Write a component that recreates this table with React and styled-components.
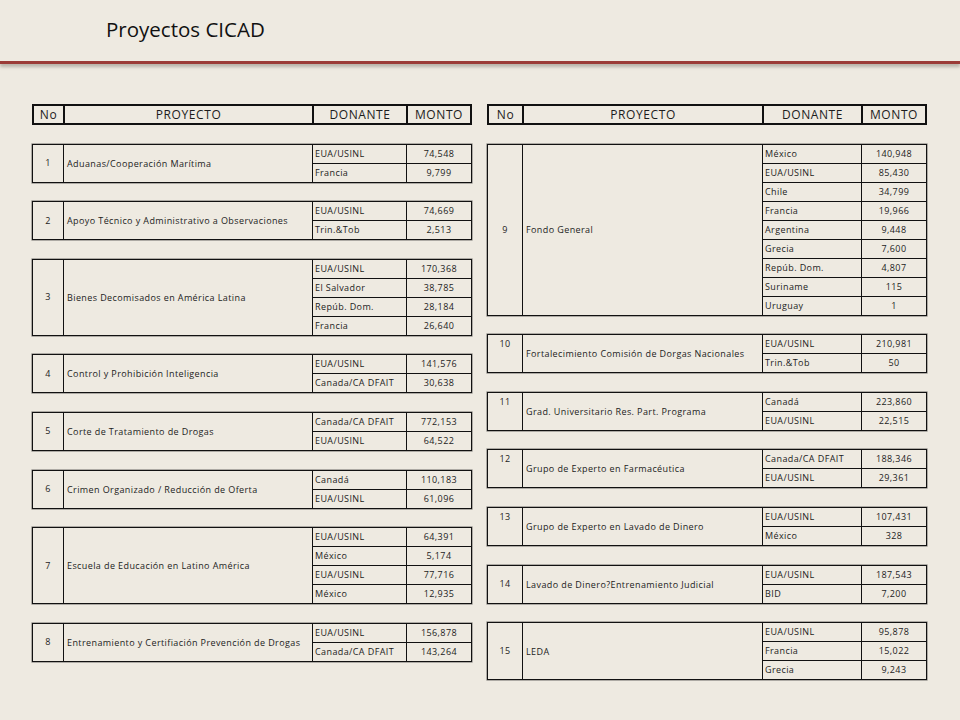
import React from 'react';
import styled, { createGlobalStyle } from 'styled-components';

const leftProjects = [
    { no: '1', name: 'Aduanas/Cooperación Marítima', rows: [['EUA/USINL', '74,548'], ['Francia', '9,799']] },
    { no: '2', name: 'Apoyo Técnico y Administrativo a Observaciones', rows: [['EUA/USINL', '74,669'], ['Trin.&Tob', '2,513']] },
    { no: '3', name: 'Bienes Decomisados en América Latina', rows: [['EUA/USINL', '170,368'], ['El Salvador', '38,785'], ['Repúb. Dom.', '28,184'], ['Francia', '26,640']] },
    { no: '4', name: 'Control y Prohibición Inteligencia', rows: [['EUA/USINL', '141,576'], ['Canada/CA DFAIT', '30,638']] },
    { no: '5', name: 'Corte de Tratamiento de Drogas', rows: [['Canada/CA DFAIT', '772,153'], ['EUA/USINL', '64,522']] },
    { no: '6', name: 'Crimen Organizado / Reducción de Oferta', rows: [['Canadá', '110,183'], ['EUA/USINL', '61,096']] },
    { no: '7', name: 'Escuela de Educación en Latino América', rows: [['EUA/USINL', '64,391'], ['México', '5,174'], ['EUA/USINL', '77,716'], ['México', '12,935']] },
    { no: '8', name: 'Entrenamiento y Certifiación Prevención de Drogas', rows: [['EUA/USINL', '156,878'], ['Canada/CA DFAIT', '143,264']] },
];

const rightProjects = [
    { no: '9', name: 'Fondo General', rows: [['México', '140,948'], ['EUA/USINL', '85,430'], ['Chile', '34,799'], ['Francia', '19,966'], ['Argentina', '9,448'], ['Grecia', '7,600'], ['Repúb. Dom.', '4,807'], ['Suriname', '115'], ['Uruguay', '1']] },
    { no: '10', top: true, name: 'Fortalecimiento Comisión de Dorgas Nacionales', rows: [['EUA/USINL', '210,981'], ['Trin.&Tob', '50']] },
    { no: '11', top: true, name: 'Grad. Universitario Res. Part. Programa', rows: [['Canadá', '223,860'], ['EUA/USINL', '22,515']] },
    { no: '12', top: true, name: 'Grupo de Experto en Farmacéutica', rows: [['Canada/CA DFAIT', '188,346'], ['EUA/USINL', '29,361']] },
    { no: '13', top: true, name: 'Grupo de Experto en Lavado de Dinero', rows: [['EUA/USINL', '107,431'], ['México', '328']] },
    { no: '14', name: 'Lavado de Dinero?Entrenamiento Judicial', rows: [['EUA/USINL', '187,543'], ['BID', '7,200']] },
    { no: '15', name: 'LEDA', rows: [['EUA/USINL', '95,878'], ['Francia', '15,022'], ['Grecia', '9,243']] },
];

// column tracks, header has a 2px frame, blocks a 1px one
const leftCols = { head: '29px 249px 94px 1fr', body: '30px 249px 94px 1fr' };
const rightCols = { head: '33px 240px 99px 1fr', body: '34px 240px 99px 1fr' };

function ProjectColumn({ cols, projects }) {
    return (
        <Column>
            <HeaderRow $cols={cols.head}>
                <HeadCell>No</HeadCell>
                <HeadCell $divider>PROYECTO</HeadCell>
                <HeadCell $divider>DONANTE</HeadCell>
                <HeadCell $divider>MONTO</HeadCell>
            </HeaderRow>
            {projects.map((p) => (
                <Block key={p.no} $cols={cols.body}>
                    <NoCell $span={p.rows.length} $top={p.top}>{p.no}</NoCell>
                    <NameCell $span={p.rows.length}>{p.name}</NameCell>
                    {p.rows.map(([donor, amount], i) => (
                        <React.Fragment key={i}>
                            <DonorCell $first={i === 0}>{donor}</DonorCell>
                            <AmountCell $first={i === 0}>{amount}</AmountCell>
                        </React.Fragment>
                    ))}
                </Block>
            ))}
        </Column>
    );
}

function App() {
    return (
        <>
            <GlobalStyle />
            <Page>
                <TitleBar>
                    <Title>Proyectos CICAD</Title>
                </TitleBar>
                <Content>
                    <ProjectColumn cols={leftCols} projects={leftProjects} />
                    <ProjectColumn cols={rightCols} projects={rightProjects} />
                </Content>
            </Page>
        </>
    );
}

export default App;

const GlobalStyle = createGlobalStyle`
  html, body {
    margin: 0;
    padding: 0;
    background: #eeeae1;
  }
  * { box-sizing: border-box; }
`;

const Page = styled.div`
    width: 960px;
    height: 720px;
    background: #eeeae1;
    font-family: "Open Sans", "Liberation Sans", sans-serif;
    color: #1c1c1c;
    overflow: hidden;
`;

const TitleBar = styled.div`
    padding: 16px 0 18px 106px;
    border-bottom: 3px solid #9b3b37;
    box-shadow: 0 3px 3px rgba(90, 80, 70, 0.35);
`;

const Title = styled.h1`
    margin: 0;
    font-size: 20.5px;
    line-height: 27px;
    font-weight: 400;
    color: #111;
`;

const Content = styled.div`
    display: flex;
    gap: 15px;
    padding: 40px 0 0 32px;
`;

const Column = styled.div`
    width: 440px;
    display: flex;
    flex-direction: column;
    gap: 18.6px;
`;

const HeaderRow = styled.div`
    display: grid;
    grid-template-columns: ${(p) => p.$cols};
    border: 2px solid #111;
    height: 21px;
`;

const HeadCell = styled.div`
    display: flex;
    align-items: center;
    justify-content: center;
    font-size: 12px;
    letter-spacing: 0.6px;
    line-height: 17px;
    border-left: ${(p) => (p.$divider ? '2px solid #111' : 'none')};
`;

const Block = styled.div`
    display: grid;
    grid-template-columns: ${(p) => p.$cols};
    border: 1px solid #111;
    box-shadow: 0 0 0 0.6px rgba(0, 0, 0, 0.45);
    font-size: 9px;
    letter-spacing: 0.4px;
`;

const NoCell = styled.div`
    grid-column: 1;
    grid-row: 1 / span ${(p) => p.$span};
    display: flex;
    justify-content: center;
    align-items: ${(p) => (p.$top ? 'flex-start' : 'center')};
    line-height: 18px;
`;

const NameCell = styled.div`
    grid-column: 2;
    grid-row: 1 / span ${(p) => p.$span};
    display: flex;
    align-items: center;
    padding-left: 3px;
    border-left: 1px solid #111;
    white-space: nowrap;
`;

const DonorCell = styled.div`
    grid-column: 3;
    box-sizing: content-box;
    height: 18px;
    line-height: 17px;
    padding-left: 2px;
    border-left: 1px solid #111;
    border-top: ${(p) => (p.$first ? 'none' : '1px solid #111')};
    white-space: nowrap;
`;

const AmountCell = styled.div`
    grid-column: 4;
    box-sizing: content-box;
    height: 18px;
    line-height: 17px;
    text-align: center;
    border-left: 1px solid #111;
    border-top: ${(p) => (p.$first ? 'none' : '1px solid #111')};
`;
